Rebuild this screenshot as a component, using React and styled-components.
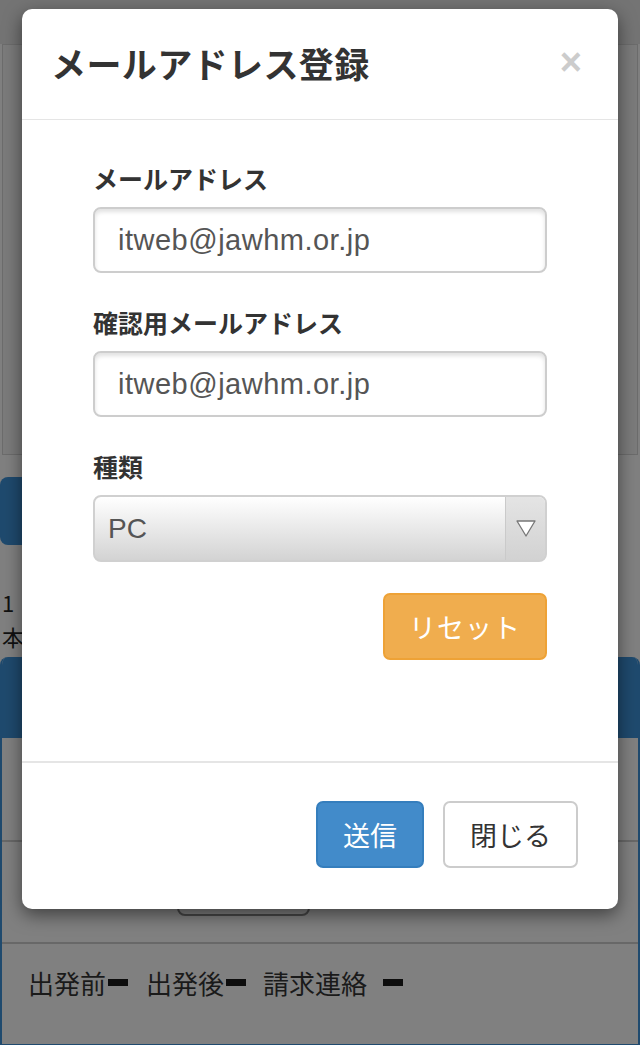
import React from 'react'
import styled, { createGlobalStyle } from 'styled-components'

const GlobalStyle = createGlobalStyle`
  html, body {
    margin: 0;
    padding: 0;
    background: #808080;
    font-family: "Liberation Sans", "Noto Sans CJK JP", sans-serif;
    color: #333;
  }
  * { box-sizing: border-box; }
`

/* ---------- page behind the dialog (already dimmed by the modal backdrop) ---------- */

const Screen = styled.div`
  position: relative;
  width: 640px;
  height: 1045px;
  overflow: hidden;
`
const Page = styled.div`
  width: 640px;
  height: 1045px;
  background: #808080;
`
const TopBar = styled.div`
  height: 44px;
  background: #747474;
`
const Panel = styled.div`
  margin: 0 2px;
  height: 411px;
  background: #7b7b7b;
  border: 1px solid #6c6c6c;
`
const BlueButton = styled.div`
  margin-top: 22px;
  width: 220px;
  height: 68px;
  border-radius: 8px;
  background: #1f4a6e;
`
const Note = styled.div`
  margin-top: 40px;
  padding-left: 2px;
  font-family: "Noto Sans CJK JP", sans-serif;
  font-size: 22px;
  line-height: 34px;
  color: #111;
`
const Table = styled.div`
  margin-top: 4px;
  border: 2px solid #1f4a6e;
  border-top: 0;
  border-radius: 8px 8px 0 0;
  overflow: hidden;
`
const TableHead = styled.div`
  height: 81px;
  background: #1f4a6e;
`
const TableRow = styled.div`
  height: 102px;
  border-top: ${p => (p.$first ? '0' : '2px solid #686868')};
  display: flex;
  align-items: center;
  padding: 0 0 ${p => p.$lift || 0}px ${p => p.$pad || 0}px;
  background: #808080;
`
const RowButton = styled.div`
  margin-top: -8px;
  width: 133px;
  height: 55px;
  border: 2px solid #474747;
  border-radius: 8px;
  background: #808080;
`
const Status = styled.div`
  display: flex;
  align-items: center;
  font-family: "Noto Sans CJK JP", sans-serif;
  font-size: 26px;
  color: #1a1a1a;
`
const Bar = styled.span`
  display: inline-block;
  width: 20px;
  height: 7px;
  background: #0d0d0d;
  margin: 0 ${p => p.$right || 17}px 0 ${p => p.$left || 1}px;
`

/* ---------- dialog ---------- */

const Backdrop = styled.div`
  position: absolute;
  top: 0;
  left: 0;
  width: 100%;
  height: 100%;
  padding: 9px 22px;
`
const Dialog = styled.div`
  background: #fff;
  border-radius: 10px;
  box-shadow: 0 6px 18px rgba(0, 0, 0, 0.5);
`
const Header = styled.div`
  height: 111px;
  padding: 0 36px 4px 29px;
  display: flex;
  align-items: center;
  justify-content: space-between;
  border-bottom: 1px solid #e5e5e5;
`
const Title = styled.h4`
  margin: 0;
  font-family: "Noto Sans CJK JP", sans-serif;
  font-size: 35px;
  font-weight: 700;
  color: #333;
  letter-spacing: 0.4px;
`
const Close = styled.span`
  font-family: "Liberation Sans", sans-serif;
  font-size: 38px;
  font-weight: 700;
  line-height: 1;
  color: #cccccc;
`
const Body = styled.div`
  padding: 40px 71px 101px;
`
const Group = styled.div`
  margin-bottom: 31px;
`
const Label = styled.div`
  font-family: "Noto Sans CJK JP", sans-serif;
  font-size: 25px;
  font-weight: 700;
  line-height: 36px;
  color: #333;
  margin-bottom: 11px;
`
const Field = styled.div`
  height: 66px;
  border: 2px solid #cdcdcd;
  border-radius: 8px;
  background: #fff;
  box-shadow: inset 0 3px 4px rgba(0, 0, 0, 0.12);
  display: flex;
  align-items: center;
  padding-left: 23px;
  font-size: 29px;
  letter-spacing: 0.5px;
  color: #555;
`
const Select = styled.div`
  height: 67px;
  border: 2px solid #d0d0d0;
  border-radius: 8px;
  background: linear-gradient(#ffffff, #d3d3d3);
  display: flex;
  align-items: center;
  justify-content: space-between;
  padding-left: 13px;
  font-size: 28px;
  color: #555;
  overflow: hidden;
`
const Arrow = styled.div`
  width: 40px;
  align-self: stretch;
  border-left: 1px solid #cacaca;
  background: linear-gradient(#e4e4e4, #d2d2d2);
  display: flex;
  align-items: center;
  justify-content: center;
`
const Actions = styled.div`
  display: flex;
  justify-content: flex-end;
  gap: 19px;
`
const Button = styled.div`
  height: 67px;
  padding: 0 ${p => p.$pad || 25}px;
  border-radius: 7px;
  border: 2px solid ${p => p.$border};
  background: ${p => p.$bg};
  color: ${p => p.$color};
  display: flex;
  align-items: center;
  font-family: "Noto Sans CJK JP", sans-serif;
  font-size: 27px;
  letter-spacing: ${p => p.$ls || 0}px;
`
const Footer = styled.div`
  border-top: 2px solid #e5e5e5;
  padding: 38px 40px 41px;
`

const DownArrow = () => (
  <svg width="20" height="17" viewBox="0 0 20 17">
    <path d="M1 1 L19 1 L10 16 Z" fill="#fff" stroke="#777" strokeWidth="1.3" strokeLinejoin="round" />
  </svg>
)

export default function App() {
  return (
    <>
      <GlobalStyle />
      <Screen>
        <Page>
          <TopBar />
          <Panel />
          <BlueButton />
          <Note>
            1<br />本
          </Note>
          <Table>
            <TableHead />
            <TableRow $first />
            <TableRow $pad={175}>
              <RowButton />
            </TableRow>
            <TableRow $pad={26} $lift={24}>
              <Status>
                出発前<Bar $left={2} $right={18} />出発後<Bar $left={2} $right={17} />請求連絡<Bar $left={16} />
              </Status>
            </TableRow>
          </Table>
        </Page>

        <Backdrop>
          <Dialog>
            <Header>
              <Title>メールアドレス登録</Title>
              <Close>×</Close>
            </Header>
            <Body>
              <Group>
                <Label>メールアドレス</Label>
                <Field>itweb@jawhm.or.jp</Field>
              </Group>
              <Group>
                <Label>確認用メールアドレス</Label>
                <Field>itweb@jawhm.or.jp</Field>
              </Group>
              <Group>
                <Label>種類</Label>
                <Select>
                  PC
                  <Arrow>
                    <DownArrow />
                  </Arrow>
                </Select>
              </Group>
              <Actions>
                <Button $bg="#f0ad4e" $border="#eea236" $color="#fff" $pad={24} $ls={1}>
                  リセット
                </Button>
              </Actions>
            </Body>
            <Footer>
              <Actions>
                <Button $bg="#428bca" $border="#357ebd" $color="#fff" $pad={25}>
                  送信
                </Button>
                <Button $bg="#fff" $border="#ccc" $color="#333" $pad={25}>
                  閉じる
                </Button>
              </Actions>
            </Footer>
          </Dialog>
        </Backdrop>
      </Screen>
    </>
  )
}
